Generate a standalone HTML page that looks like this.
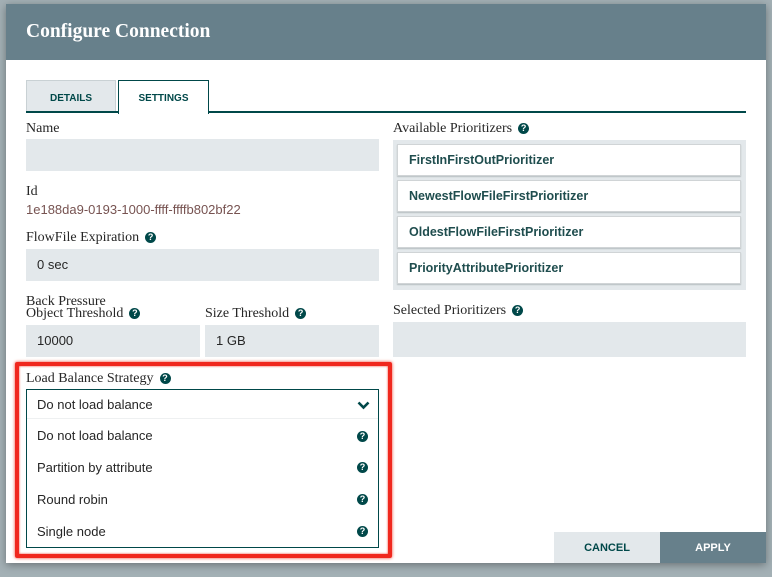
<!DOCTYPE html><html><head><style>
body{margin:0;width:772px;height:577px;background:#a3b0b5;position:relative;overflow:hidden;font-family:"Liberation Sans",sans-serif}
.abs{position:absolute}
.dlg{left:6px;top:4px;width:760px;height:559px;background:#fff;box-shadow:0 2px 8px rgba(0,0,0,.35)}
.hdr{left:6px;top:4px;width:760px;height:56px;background:#67808b;color:#fff;font-family:"Liberation Serif",serif;font-weight:bold;font-size:19.5px;line-height:56px;padding-left:20px;box-sizing:border-box}
.lbl{font-family:"Liberation Serif",serif;font-size:14px;color:#262626}
.inp{background:#e3e8eb;font-size:13px;color:#262626;box-sizing:border-box;padding-left:11px}
.q{display:inline-block;width:11px;height:11px;border-radius:50%;background:#004849;color:#fff;font-size:9px;font-weight:bold;text-align:center;line-height:11px;vertical-align:1px;margin-left:6px;font-family:"Liberation Sans",sans-serif}
.tab{top:80px;height:33px;font-size:10px;font-weight:bold;color:#004849;text-align:center;line-height:35px;box-sizing:border-box}
.pr{left:397px;width:344px;height:32px;background:#fff;border:1px solid #d0d4d6;box-shadow:0 1px 1px #b8bfc2;box-sizing:border-box;font-size:12.5px;font-weight:bold;color:#1f4d4e;line-height:30px;padding-left:11px}
.opt{left:37px;font-size:13px;color:#262626}
.oq{left:357px}
</style></head><body>
<div class="abs dlg"></div>
<div class="abs hdr">Configure Connection</div>
<div class="abs tab" style="left:26px;width:90px;background:#e3e8eb;border:1px solid #c9d1d4;border-bottom:none">DETAILS</div>
<div class="abs" style="left:26px;top:111px;width:720px;height:2px;background:#004849"></div>
<div class="abs tab" style="left:118px;width:91px;background:#fff;border:1.5px solid #004849;border-bottom:none;height:34px">SETTINGS</div>

<div class="abs lbl" style="left:26px;top:121px">Name</div>
<div class="abs inp" style="left:26px;top:139px;width:353px;height:32px"></div>
<div class="abs lbl" style="left:26px;top:184px">Id</div>
<div class="abs" style="left:26px;top:202px;font-size:13px;color:#775351">1e188da9-0193-1000-ffff-ffffb802bf22</div>
<div class="abs lbl" style="left:26px;top:230px">FlowFile Expiration<span class="q">?</span></div>
<div class="abs inp" style="left:26px;top:249px;width:353px;height:32px;line-height:32px">0 sec</div>
<div class="abs lbl" style="left:26px;top:294px">Back Pressure</div>
<div class="abs lbl" style="left:26px;top:306px">Object Threshold<span class="q">?</span></div>
<div class="abs lbl" style="left:205px;top:306px">Size Threshold<span class="q">?</span></div>
<div class="abs inp" style="left:26px;top:325px;width:174px;height:32px;line-height:32px">10000</div>
<div class="abs inp" style="left:205px;top:325px;width:174px;height:32px;line-height:32px">1 GB</div>

<div class="abs lbl" style="left:393px;top:121px">Available Prioritizers<span class="q">?</span></div>
<div class="abs" style="left:393px;top:140px;width:353px;height:150px;background:#e3e8eb"></div>
<div class="abs pr" style="top:144px">FirstInFirstOutPrioritizer</div>
<div class="abs pr" style="top:180px">NewestFlowFileFirstPrioritizer</div>
<div class="abs pr" style="top:216px">OldestFlowFileFirstPrioritizer</div>
<div class="abs pr" style="top:252px">PriorityAttributePrioritizer</div>
<div class="abs lbl" style="left:393px;top:303px">Selected Prioritizers<span class="q">?</span></div>
<div class="abs" style="left:393px;top:322px;width:353px;height:35px;background:#e3e8eb"></div>

<div class="abs" style="left:15px;top:362px;width:369px;height:188px;border:4px solid #f0281e;border-radius:2px;box-shadow:0 0 3px #f04030, inset 0 0 2px #f04030"></div>
<div class="abs lbl" style="left:26px;top:371px">Load Balance Strategy<span class="q">?</span></div>
<div class="abs" style="left:26px;top:389px;width:353px;height:159px;border:1px solid #004849;box-sizing:border-box;background:#fff"></div>
<div class="abs" style="left:27px;top:418px;width:351px;height:1px;background:#eef0f1"></div>
<div class="abs opt" style="top:397px">Do not load balance</div>
<svg class="abs" style="left:357px;top:401px" width="13" height="9"><path d="M1.5 1.5 L6.5 6.5 L11.5 1.5" stroke="#004849" stroke-width="2.6" fill="none"/></svg>
<div class="abs opt" style="top:428px">Do not load balance</div><span class="abs q oq" style="top:431px;margin:0">?</span>
<div class="abs opt" style="top:460px">Partition by attribute</div><span class="abs q oq" style="top:462px;margin:0">?</span>
<div class="abs opt" style="top:492px">Round robin</div><span class="abs q oq" style="top:494px;margin:0">?</span>
<div class="abs opt" style="top:524px">Single node</div><span class="abs q oq" style="top:526px;margin:0">?</span>

<div class="abs" style="left:554px;top:532px;width:106px;height:31px;background:#e3e8eb;color:#004849;font-size:11px;font-weight:bold;text-align:center;line-height:32px">CANCEL</div>
<div class="abs" style="left:660px;top:532px;width:106px;height:31px;background:#67808b;color:#fff;font-size:11px;font-weight:bold;text-align:center;line-height:32px">APPLY</div>
</body></html>
